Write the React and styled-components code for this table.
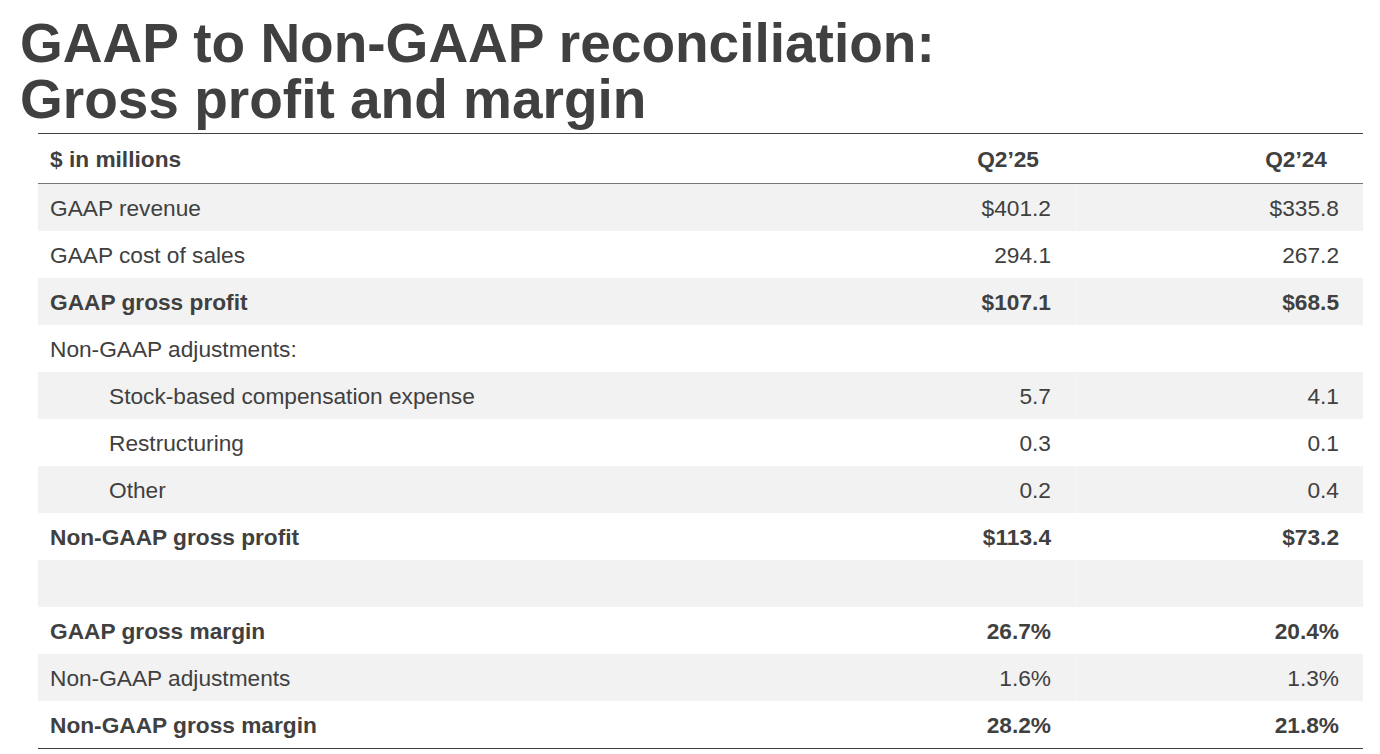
import React from "react";
import styled, { createGlobalStyle } from "styled-components";

const Global = createGlobalStyle`
  html, body { margin: 0; padding: 0; background: #ffffff; }
  body { font-family: "Liberation Sans", Arial, sans-serif; color: #404040; }
`;

const Page = styled.div`
  width: 1380px;
  height: 754px;
  overflow: hidden;
  display: flex;
  flex-direction: column;
`;

const Title = styled.h1`
  margin: 15px 0 0 20px;
  font-size: 55px;
  line-height: 56px;
  font-weight: 700;
  color: #404040;
  letter-spacing: 0;
`;

const Table = styled.div`
  margin: 6px 0 0 38px;
  width: 1325px;
  border-top: 1px solid #404040;
  border-bottom: 1px solid #404040;
  display: flex;
  flex-direction: column;
`;

const Row = styled.div`
  display: grid;
  grid-template-columns: 1fr 300px 288px;
  height: ${(p) => (p.$header ? "49px" : "47px")};
  background: ${(p) => (p.$shade ? "#f2f2f2" : "#ffffff")};
  border-bottom: ${(p) => (p.$header ? "1px solid #777777" : "none")};
  font-size: 22.7px;
  font-weight: ${(p) => (p.$bold ? 700 : 400)};
  color: #404040;
`;

const Label = styled.div`
  display: flex;
  align-items: center;
  padding-top: 1px;
  padding-left: ${(p) => (p.$indent ? "71px" : "12px")};
  white-space: nowrap;
`;

const Value = styled.div`
  display: flex;
  align-items: center;
  justify-content: flex-end;
  padding-top: 1px;
  padding-right: ${(p) => (p.$header ? "36px" : "24px")};
  white-space: nowrap;
  border-left: ${(p) => (p.$sep ? "1px solid rgba(255,255,255,0.3)" : "none")};
`;

const rows = [
  { label: "GAAP revenue", a: "$401.2", b: "$335.8" },
  { label: "GAAP cost of sales", a: "294.1", b: "267.2" },
  { label: "GAAP gross profit", a: "$107.1", b: "$68.5", bold: true },
  { label: "Non-GAAP adjustments:", a: "", b: "" },
  { label: "Stock-based compensation expense", a: "5.7", b: "4.1", indent: true },
  { label: "Restructuring", a: "0.3", b: "0.1", indent: true },
  { label: "Other", a: "0.2", b: "0.4", indent: true },
  { label: "Non-GAAP gross profit", a: "$113.4", b: "$73.2", bold: true },
  { label: "", a: "", b: "" },
  { label: "GAAP gross margin", a: "26.7%", b: "20.4%", bold: true },
  { label: "Non-GAAP adjustments", a: "1.6%", b: "1.3%" },
  { label: "Non-GAAP gross margin", a: "28.2%", b: "21.8%", bold: true },
];

export default function App() {
  return (
    <Page>
      <Global />
      <Title>
        GAAP to Non-GAAP reconciliation:
        <br />
        Gross profit and margin
      </Title>
      <Table>
        <Row $header $bold>
          <Label>$ in millions</Label>
          <Value $header>Q2’25</Value>
          <Value $header>Q2’24</Value>
        </Row>
        {rows.map((r, i) => (
          <Row key={i} $shade={i % 2 === 0} $bold={r.bold}>
            <Label $indent={r.indent}>{r.label}</Label>
            <Value>{r.a}</Value>
            <Value $sep>{r.b}</Value>
          </Row>
        ))}
      </Table>
    </Page>
  );
}
